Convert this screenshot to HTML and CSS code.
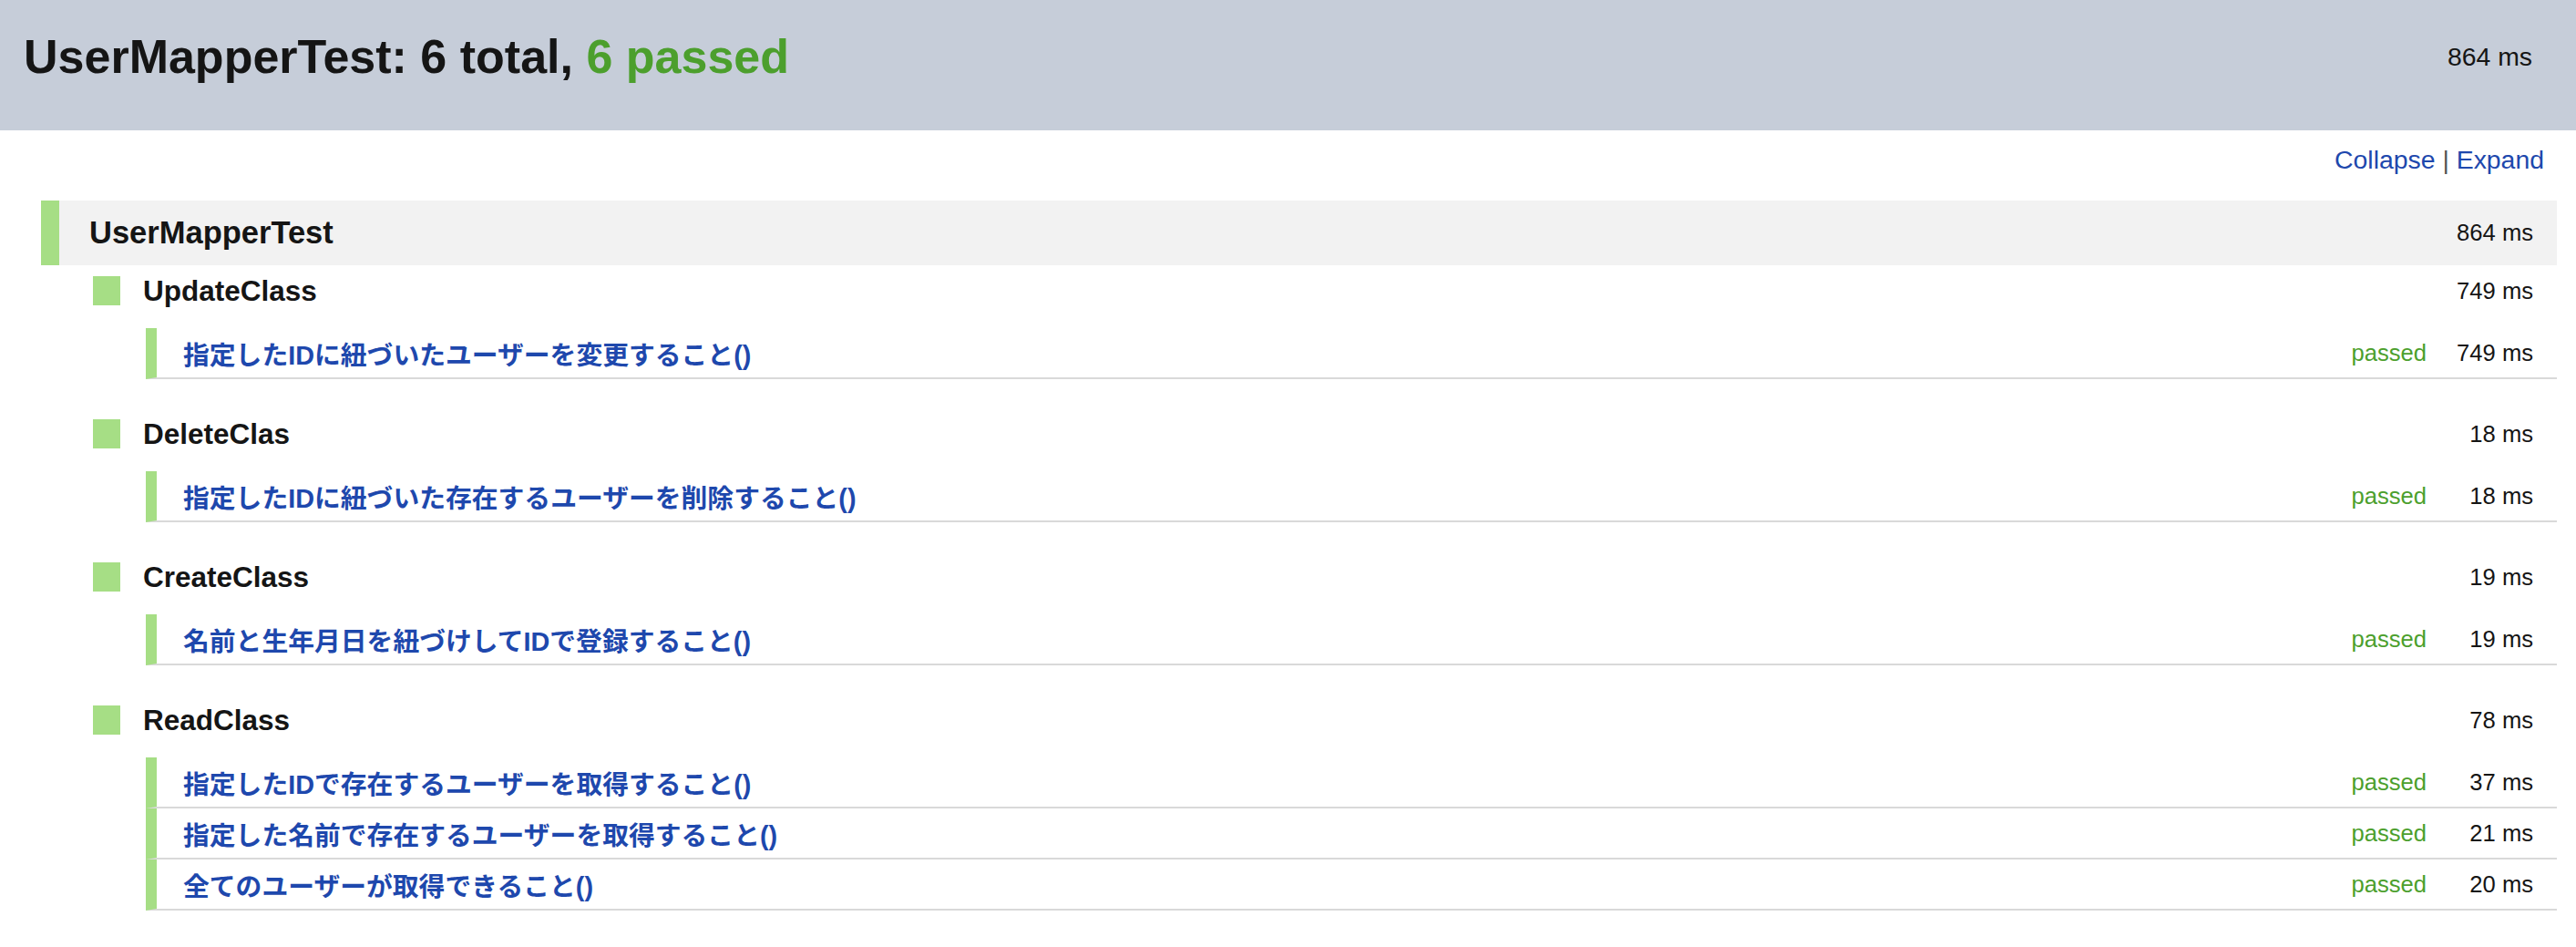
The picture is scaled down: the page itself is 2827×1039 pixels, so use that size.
FILE: index.html
```html
<!DOCTYPE html>
<html lang="ja">
<head>
<meta charset="utf-8">
<title>UserMapperTest</title>
<link rel="stylesheet" href="styles.css">
</head>
<body>
<header class="top">
  <h1 class="title">UserMapperTest: 6 total, <span class="ok">6 passed</span></h1>
  <span class="top-time">864 ms</span>
</header>
<div class="toolbar">
  <a class="link" href="#">Collapse</a><span class="sep"> | </span><a class="link" href="#">Expand</a>
</div>
<section class="suite">
  <div class="suite-head">
    <span class="suite-name">UserMapperTest</span>
    <span class="suite-time">864 ms</span>
  </div>
  <div class="classes">
    <div class="cls">
      <div class="cls-head"><span class="mark"></span><span class="cls-name">UpdateClass</span><span class="cls-time">749 ms</span></div>
      <div class="test"><span class="test-name">指定したIDに紐づいたユーザーを変更すること()</span><span class="status">passed</span><span class="test-time">749 ms</span></div>
    </div>
    <div class="cls">
      <div class="cls-head"><span class="mark"></span><span class="cls-name">DeleteClas</span><span class="cls-time">18 ms</span></div>
      <div class="test"><span class="test-name">指定したIDに紐づいた存在するユーザーを削除すること()</span><span class="status">passed</span><span class="test-time">18 ms</span></div>
    </div>
    <div class="cls">
      <div class="cls-head"><span class="mark"></span><span class="cls-name">CreateClass</span><span class="cls-time">19 ms</span></div>
      <div class="test"><span class="test-name">名前と生年月日を紐づけしてIDで登録すること()</span><span class="status">passed</span><span class="test-time">19 ms</span></div>
    </div>
    <div class="cls">
      <div class="cls-head"><span class="mark"></span><span class="cls-name">ReadClass</span><span class="cls-time">78 ms</span></div>
      <div class="test"><span class="test-name">指定したIDで存在するユーザーを取得すること()</span><span class="status">passed</span><span class="test-time">37 ms</span></div>
      <div class="test"><span class="test-name">指定した名前で存在するユーザーを取得すること()</span><span class="status">passed</span><span class="test-time">21 ms</span></div>
      <div class="test"><span class="test-name">全てのユーザーが取得できること()</span><span class="status">passed</span><span class="test-time">20 ms</span></div>
    </div>
  </div>
</section>
</body>
</html>
```

FILE: styles.css
```css
html, body {
  margin: 0;
  padding: 0;
  background: #ffffff;
}

body {
  font-family: "Liberation Sans", Arial, "Noto Sans CJK JP", sans-serif;
  color: #151515;
}

.top {
  display: flex;
  align-items: center;
  justify-content: space-between;
  height: 124px;
  padding: 0 48px 19px 26px;
  background: #c6cdd9;
}

.title {
  margin: 0;
  font-size: 52px;
  font-weight: bold;
  color: #151515;
}

.ok {
  color: #4c9f2d;
}

.top-time {
  font-size: 28.4px;
}

.toolbar {
  text-align: right;
  padding: 12px 35px 25px 0;
  line-height: 40px;
  font-size: 28.4px;
}

.link {
  color: #1e48ad;
  text-decoration: none;
}

.sep {
  color: #555555;
}

.suite {
  margin: 0 21px 0 45px;
}

.suite-head {
  display: flex;
  align-items: center;
  justify-content: space-between;
  height: 71px;
  padding: 0 26px 0 33px;
  background: #f2f2f2;
  border-left: 20px solid #a6de85;
}

.suite-name {
  font-size: 34.5px;
  font-weight: bold;
}

.suite-time {
  font-size: 25.6px;
}

.classes {
  padding-left: 57px;
}

.cls + .cls {
  margin-top: 32px;
}

.cls-head {
  display: flex;
  align-items: center;
  height: 32px;
  padding: 12px 26px 25px 0;
}

.mark {
  width: 30px;
  height: 32px;
  background: #a6de85;
  margin-right: 25px;
  flex: none;
}

.cls-name {
  font-size: 31.5px;
  font-weight: bold;
  flex: 1;
}

.cls-time {
  font-size: 25.6px;
}

.test {
  display: flex;
  align-items: center;
  height: 54px;
  margin-left: 58px;
  padding: 0 26px 0 29px;
  border-left: 12px solid #a6de85;
  border-bottom: 2px solid #d9d9d9;
}

.test-name {
  flex: 1;
  font-size: 28.8px;
  font-weight: bold;
  color: #1e48ad;
}

.status {
  font-size: 25.6px;
  color: #4c9f2d;
}

.test-time {
  width: 117px;
  text-align: right;
  font-size: 25.6px;
}
```
